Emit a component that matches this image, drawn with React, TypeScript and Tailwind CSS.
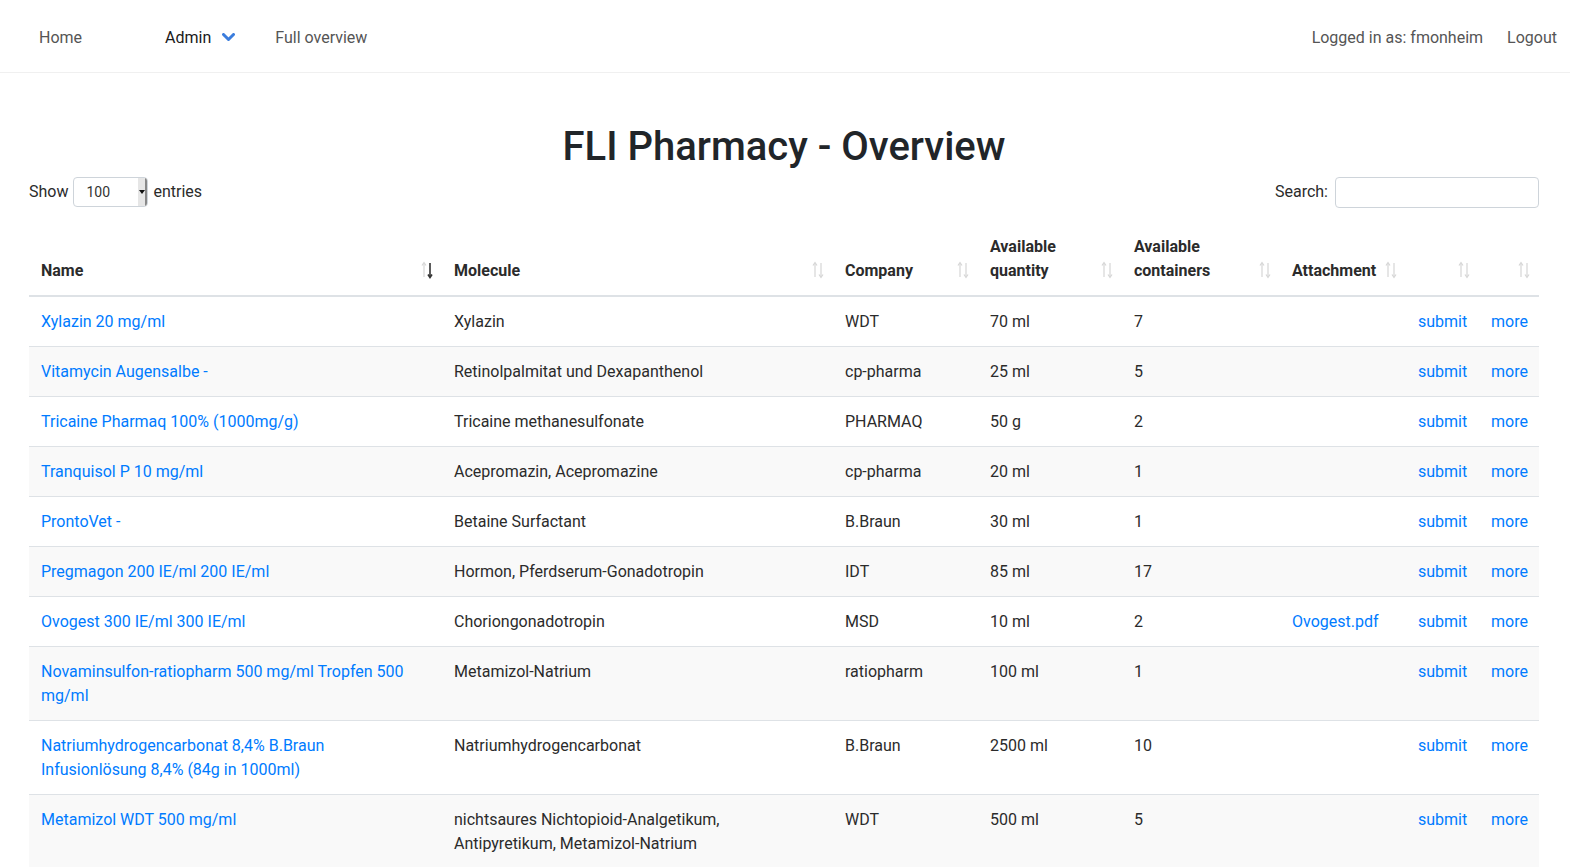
import React from "react"

interface Drug {
  name: string
  molecule: string
  company: string
  quantity: string
  containers: string
  attachment?: string
}

const drugs: Drug[] = [
  { name: "Xylazin 20 mg/ml", molecule: "Xylazin", company: "WDT", quantity: "70 ml", containers: "7" },
  { name: "Vitamycin Augensalbe -", molecule: "Retinolpalmitat und Dexapanthenol", company: "cp-pharma", quantity: "25 ml", containers: "5" },
  { name: "Tricaine Pharmaq 100% (1000mg/g)", molecule: "Tricaine methanesulfonate", company: "PHARMAQ", quantity: "50 g", containers: "2" },
  { name: "Tranquisol P 10 mg/ml", molecule: "Acepromazin, Acepromazine", company: "cp-pharma", quantity: "20 ml", containers: "1" },
  { name: "ProntoVet -", molecule: "Betaine Surfactant", company: "B.Braun", quantity: "30 ml", containers: "1" },
  { name: "Pregmagon 200 IE/ml 200 IE/ml", molecule: "Hormon, Pferdserum-Gonadotropin", company: "IDT", quantity: "85 ml", containers: "17" },
  { name: "Ovogest 300 IE/ml 300 IE/ml", molecule: "Choriongonadotropin", company: "MSD", quantity: "10 ml", containers: "2", attachment: "Ovogest.pdf" },
  { name: "Novaminsulfon-ratiopharm 500 mg/ml Tropfen 500 mg/ml", molecule: "Metamizol-Natrium", company: "ratiopharm", quantity: "100 ml", containers: "1" },
  { name: "Natriumhydrogencarbonat 8,4% B.Braun Infusionlösung 8,4% (84g in 1000ml)", molecule: "Natriumhydrogencarbonat", company: "B.Braun", quantity: "2500 ml", containers: "10" },
  { name: "Metamizol WDT 500 mg/ml", molecule: "nichtsaures Nichtopioid-Analgetikum, Antipyretikum, Metamizol-Natrium", company: "WDT", quantity: "500 ml", containers: "5" },
]

const columns = [
  { label: ["Name"], width: "w-[413px]" },
  { label: ["Molecule"], width: "w-[391px]" },
  { label: ["Company"], width: "w-[145px]" },
  { label: ["Available", "quantity"], width: "w-[144px]" },
  { label: ["Available", "containers"], width: "w-[158px]" },
  { label: ["Attachment"], width: "w-[126px]" },
  { label: [""], width: "w-[73px]" },
  { label: [""], width: "w-[60px]" },
]

// DataTables style up/down arrows
function SortIcon({ active }: { active?: boolean }) {
  return (
    <svg className="mb-[4px] shrink-0" width="12" height="18" viewBox="0 0 12 18" fill="none">
      <g stroke="#d6d6d6" strokeWidth="1.2">
        <line x1="3" y1="2" x2="3" y2="16" />
        <polyline points="1,4.5 3,1.5 5,4.5" />
      </g>
      <g stroke={active ? "#333" : "#d6d6d6"} strokeWidth={active ? "1.6" : "1.2"}>
        <line x1="9" y1="2" x2="9" y2="16" />
        <polyline points="7,13.5 9,16.5 11,13.5" />
      </g>
    </svg>
  )
}

export default function App() {
  return (
    <div className="min-h-screen bg-white text-[#2b2b2b] text-base font-['Roboto',sans-serif]">
      {/* Navbar */}
      <nav className="h-[73px] pt-[3px] border-b border-[#f0f0f0] flex items-center justify-between pl-[39px] pr-[13px]">
        <div className="flex items-center">
          <a className="text-[#555]">Home</a>
          <a className="ml-[83px] text-[#1a1a1a] flex items-center">
            Admin
            <svg className="ml-[11px] w-[13px] h-[9px]" viewBox="0 0 13 9" fill="none">
              <polyline points="1.5,1.5 6.5,6.5 11.5,1.5" stroke="#3b7ddd" strokeWidth="3" strokeLinecap="round" strokeLinejoin="round" />
            </svg>
          </a>
          <a className="ml-[40px] text-[#555]">Full overview</a>
        </div>
        <div className="flex items-center text-[#555]">
          <span>Logged in as: fmonheim</span>
          <a className="ml-[24px]">Logout</a>
        </div>
      </nav>

      <main className="pl-[29px] pr-[31px]">
        <h1 className="mt-[50px] text-center text-[40px] leading-[48px] font-medium text-[#212529]">
          FLI Pharmacy - Overview
        </h1>

        {/* Table controls */}
        <div className="mt-[6px] flex items-center justify-between h-[30px]">
          <div className="flex items-center">
            <span>Show</span>
            <div className="ml-[5px] flex h-[30px] w-[75px] items-stretch rounded-[4px] border border-[#ced4da] bg-white overflow-hidden">
              <span className="flex-1 pl-[12px] text-[14px] leading-[28px] text-[#333]">100</span>
              <span className="w-[9px] bg-[#e6e6e6] border-r-2 border-[#888] flex items-center justify-center">
                <svg width="6" height="4" viewBox="0 0 6 4"><polygon points="0,0 6,0 3,4" fill="#111" /></svg>
              </span>
            </div>
            <span className="ml-[5px]">entries</span>
          </div>
          <div className="flex items-center">
            <span>Search:</span>
            <div className="ml-[7px] h-[31px] w-[204px] rounded-[4px] border border-[#ced4da] bg-white" />
          </div>
        </div>

        <table className="mt-[16px] w-full table-fixed border-collapse">
          <colgroup>
            {columns.map((c, i) => (
              <col key={i} className={c.width} />
            ))}
          </colgroup>
          <thead>
            <tr className="border-b-2 border-[#dee2e6]">
              {columns.map((c, i) => (
                <th key={i} className="pl-[12px] pr-[9px] pt-[12px] pb-[12px] align-bottom text-left font-bold leading-[24px] text-[16px]">
                  <div className="flex items-end justify-between">
                    <span className="whitespace-nowrap">
                      {c.label.map((l, j) => (
                        <div key={j}>{l || "\u00a0"}</div>
                      ))}
                    </span>
                    <SortIcon active={i === 0} />
                  </div>
                </th>
              ))}
            </tr>
          </thead>
          <tbody>
            {drugs.map((d, i) => (
              <tr key={i} className={`border-b border-[#dee2e6] align-top leading-[24px] ${i % 2 === 1 ? "bg-[#f9f9f9]" : "bg-white"}`}>
                <td className="px-[12px] pt-[13px] pb-[12px] text-[#007bff]">{d.name}</td>
                <td className="px-[12px] pt-[13px] pb-[12px]">{d.molecule}</td>
                <td className="px-[12px] pt-[13px] pb-[12px]">{d.company}</td>
                <td className="px-[12px] pt-[13px] pb-[12px]">{d.quantity}</td>
                <td className="px-[12px] pt-[13px] pb-[12px]">{d.containers}</td>
                <td className="px-[12px] pt-[13px] pb-[12px] text-[#007bff]">{d.attachment}</td>
                <td className="px-[12px] pt-[13px] pb-[12px] text-[#007bff]">submit</td>
                <td className="px-[12px] pt-[13px] pb-[12px] text-[#007bff]">more</td>
              </tr>
            ))}
          </tbody>
        </table>
      </main>
    </div>
  )
}
